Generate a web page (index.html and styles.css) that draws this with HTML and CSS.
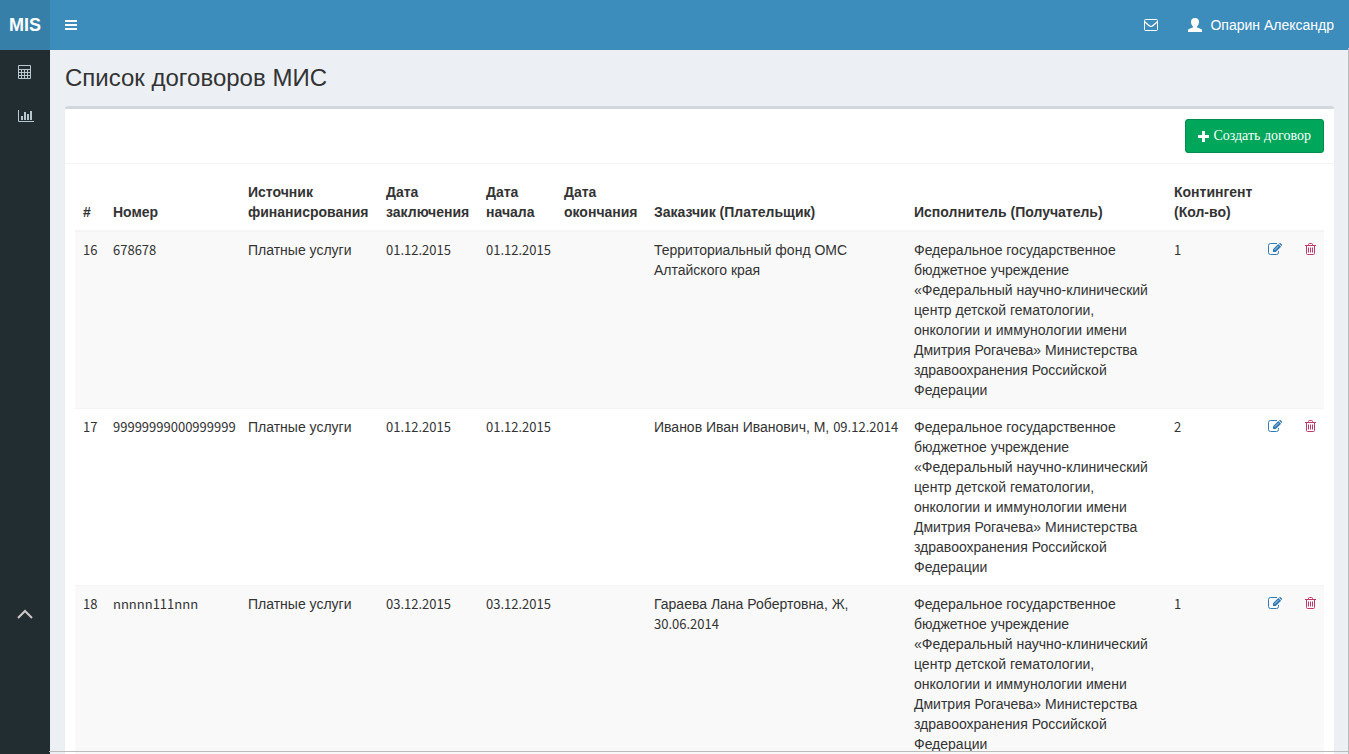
FILE: index.html
```html
<!DOCTYPE html>
<html lang="ru">
<head>
<meta charset="utf-8">
<title>Список договоров МИС</title>
<link rel="stylesheet" href="styles.css">
</head>
<body>
<svg class="sprite" aria-hidden="true">
  <symbol id="edit" viewBox="0 0 14 12">
    <path d="M9 .5H2.500Q.5.5.5 2.500v7q0 2 2 2h6q2 0 2-2V8" fill="none" stroke="currentColor"/>
    <path d="M5 9V6.200L10.300 .9l2.800 2.800L7.800 9zM11 .6l.6-.6h.8L14 1.600v.8l-.6.6z" fill="currentColor"/>
    <path d="M6.500 7L10.500 3" stroke="#fff" stroke-width=".6"/>
  </symbol>
  <symbol id="trash" viewBox="0 0 11 12">
    <path d="M0 2.500h11M3.500 2.500V1.500Q3.500.5 4.500.5h2q1 0 1 1v1M1.500 2.500v8q0 1 1 1h6q1 0 1-1v-8M3.500 4.500v5M5.500 4.500v5M7.500 4.500v5" fill="none" stroke="currentColor"/>
  </symbol>
</svg>
<div class="app">
  <header class="topbar">
    <a class="logo" href="#">MIS</a>
    <button class="toggle" type="button" aria-label="Меню">
      <svg width="12" height="10" viewBox="0 0 12 10" fill="currentColor"><path d="M0 0h12v2H0zM0 4h12v2H0zM0 8h12v2H0z"/></svg>
    </button>
    <nav class="usernav">
      <a href="#" aria-label="Сообщения">
        <svg width="14" height="12" viewBox="0 0 14 12" fill="none" stroke="currentColor"><rect x=".5" y=".5" width="13" height="11" rx="1"/><path d="M.5 2.500C3 5 5.500 7.500 7 7.500S11 5 13.500 2.500" stroke-width="1.200"/></svg>
      </a>
      <a href="#">
        <svg width="14" height="14" viewBox="0 0 14 14" fill="currentColor"><path d="M7 0c2.600 0 4 1.700 4 3.900 0 1.900-.8 3.500-1.900 4.300v1.200c1.800.7 3.800 1.200 4.500 1.900.4.400.4 1.400.4 2.700H0c0-1.300 0-2.300.4-2.700.7-.7 2.700-1.200 4.500-1.900V8.200C3.800 7.400 3 5.800 3 3.900 3 1.700 4.400 0 7 0z"/></svg>
        <span>Опарин Александр</span>
      </a>
    </nav>
  </header>
  <div class="main">
    <aside class="sidebar">
      <a href="#" aria-label="Договоры">
        <svg width="13" height="14" viewBox="0 0 13 14" fill="none" stroke="currentColor"><path d="M.5.5h12v13H.5zM.5 4.500h12M.5 7.500h12M.5 10.500h12M3.500 4.500v9M6.500 4.500v9M9.500 4.500v9"/></svg>
      </a>
      <a href="#" aria-label="Отчёты">
        <svg width="16" height="12" viewBox="0 0 16 12"><path d="M.5 0v11.500H16" fill="none" stroke="currentColor"/><path d="M3 6h2v4H3zM6 2h2v8H6zM9 4h2v6H9zM12 1h2v9h-2z" fill="currentColor"/></svg>
      </a>
      <button class="to-top" type="button" aria-label="Наверх">
        <svg width="16" height="10" viewBox="0 0 16 10" fill="none" stroke="currentColor" stroke-width="2"><path d="M1 9l7-7 7 7"/></svg>
      </button>
    </aside>
    <main class="content">
      <h1>Список договоров МИС</h1>
      <section class="box">
        <div class="box-header">
          <button class="create" type="button">
            <svg width="11" height="11" viewBox="0 0 11 11" fill="currentColor"><path d="M4 0h3v4h4v3H7v4H4V7H0V4h4z"/></svg>
            <span>Создать договор</span>
          </button>
        </div>
        <div class="box-body">
          <table>
            <colgroup>
              <col class="c-id"><col class="c-num"><col class="c-src"><col class="c-signed"><col class="c-start"><col class="c-end"><col><col><col class="c-count"><col class="c-edit"><col class="c-del">
            </colgroup>
            <thead>
              <tr><th>#</th><th>Номер</th><th>Источник финанисрования</th><th>Дата заключения</th><th>Дата начала</th><th>Дата окончания</th><th>Заказчик (Плательщик)</th><th>Исполнитель (Получатель)</th><th>Контингент (Кол-во)</th><th></th><th></th></tr>
            </thead>
            <tbody>
              <tr>
                <td><span class="num">16</span></td><td><span class="num">678678</span></td><td>Платные услуги</td><td><span class="num">01.12.2015</span></td><td><span class="num">01.12.2015</span></td><td></td>
                <td>Территориальный фонд ОМС Алтайского края</td>
                <td>Федеральное государственное бюджетное учреждение «Федеральный научно-клинический центр детской гематологии, онкологии и иммунологии имени Дмитрия Рогачева» Министерства здравоохранения Российской Федерации</td>
                <td><span class="num">1</span></td>
                <td><a class="edit" href="#" aria-label="Изменить"><svg width="14" height="12"><use href="#edit"/></svg></a></td>
                <td><a class="del" href="#" aria-label="Удалить"><svg width="11" height="12"><use href="#trash"/></svg></a></td>
              </tr>
              <tr>
                <td><span class="num">17</span></td><td><span class="num">99999999000999999</span></td><td>Платные услуги</td><td><span class="num">01.12.2015</span></td><td><span class="num">01.12.2015</span></td><td></td>
                <td>Иванов Иван Иванович, М, <span class="num">09.12.2014</span></td>
                <td>Федеральное государственное бюджетное учреждение «Федеральный научно-клинический центр детской гематологии, онкологии и иммунологии имени Дмитрия Рогачева» Министерства здравоохранения Российской Федерации</td>
                <td><span class="num">2</span></td>
                <td><a class="edit" href="#" aria-label="Изменить"><svg width="14" height="12"><use href="#edit"/></svg></a></td>
                <td><a class="del" href="#" aria-label="Удалить"><svg width="11" height="12"><use href="#trash"/></svg></a></td>
              </tr>
              <tr>
                <td><span class="num">18</span></td><td><span class="num">nnnnn111nnn</span></td><td>Платные услуги</td><td><span class="num">03.12.2015</span></td><td><span class="num">03.12.2015</span></td><td></td>
                <td>Гараева Лана Робертовна, Ж, <span class="num">30.06.2014</span></td>
                <td>Федеральное государственное бюджетное учреждение «Федеральный научно-клинический центр детской гематологии, онкологии и иммунологии имени Дмитрия Рогачева» Министерства здравоохранения Российской Федерации</td>
                <td><span class="num">1</span></td>
                <td><a class="edit" href="#" aria-label="Изменить"><svg width="14" height="12"><use href="#edit"/></svg></a></td>
                <td><a class="del" href="#" aria-label="Удалить"><svg width="11" height="12"><use href="#trash"/></svg></a></td>
              </tr>
            </tbody>
          </table>
        </div>
      </section>
    </main>
  </div>
</div>
</body>
</html>
```
FILE: styles.css
```css
* { box-sizing: border-box; }
body {
  margin: 0;
  font: 14px/20px "Liberation Sans", Arial, sans-serif;
  color: #333;
  background: #ecf0f5;
}
a { color: inherit; text-decoration: none; }
button { border: 0; background: none; color: inherit; font: inherit; cursor: pointer; }
svg { display: block; }
.sprite { position: absolute; width: 0; height: 0; }

.app { position: relative; display: flex; flex-direction: column; height: 100vh; overflow: hidden; }
/* frame lines along the right and bottom edges of the work area */
.app::before,
.app::after {
  content: "";
  position: absolute;
  right: 0;
  background: #bbb;
  pointer-events: none;
}
.app::before { top: 48px; bottom: 0; width: 1px; }
.app::after { left: 49px; bottom: 2px; height: 1px; }

.topbar { display: flex; flex: none; height: 50px; background: #3c8dbc; color: #fff; }
.logo {
  display: flex; align-items: center; justify-content: center;
  width: 50px; background: #367fa9;
  font-size: 18px; font-weight: bold;
}
.toggle { padding: 0 15px; }
.usernav { display: flex; margin-left: auto; }
.usernav a { display: flex; align-items: center; gap: 8px; padding: 0 15px; }

.main { display: flex; flex: 1; min-height: 0; }
.sidebar { display: flex; flex-direction: column; flex: none; width: 50px; background: #222d32; color: #b8c7ce; }
.sidebar a { display: flex; align-items: center; height: 44px; padding-left: 18px; }
.to-top { display: flex; justify-content: center; margin-top: auto; padding: 0 0 135px; color: #cfc8c8; }

.content { flex: 1; min-width: 0; padding: 15px; }
h1 { margin: 0 0 15px; font-size: 24px; font-weight: normal; line-height: 26px; }

.box { border-top: 3px solid #d2d6de; border-radius: 3px; background: #fff; box-shadow: 0 1px 1px rgba(0, 0, 0, .1); }
.box-header { display: flex; justify-content: flex-end; padding: 10px; border-bottom: 1px solid #f4f4f4; }
.create {
  display: flex; align-items: center; gap: 4px;
  padding: 6px 12px;
  border: 1px solid #008d4c; border-radius: 3px;
  background: #00a65a; color: #fff;
  font-family: "Liberation Serif", "Times New Roman", serif;
}
.box-body { padding: 10px; }

table { width: 100%; table-layout: fixed; border-collapse: collapse; }
.c-id { width: 30px; }
.c-num { width: 135px; }
.c-src { width: 138px; }
.c-signed { width: 100px; }
.c-start { width: 78px; }
.c-end { width: 90px; }
.c-count { width: 94px; }
.c-edit { width: 37px; }
.c-del { width: 27px; }
th, td { padding: 8px 4px 8px 8px; text-align: left; }
th { vertical-align: bottom; border-bottom: 2px solid #f4f4f4; }
td { vertical-align: top; border-top: 1px solid #f4f4f4; }
tbody tr:nth-child(odd) { background: #f9f9f9; }
.num { font-family: "Noto Sans CJK SC", sans-serif; font-size: 13px; line-height: 16px; }
td a { display: block; padding-top: 3px; }
.edit { color: #337ab7; }
.del { color: #c0396b; }
```
